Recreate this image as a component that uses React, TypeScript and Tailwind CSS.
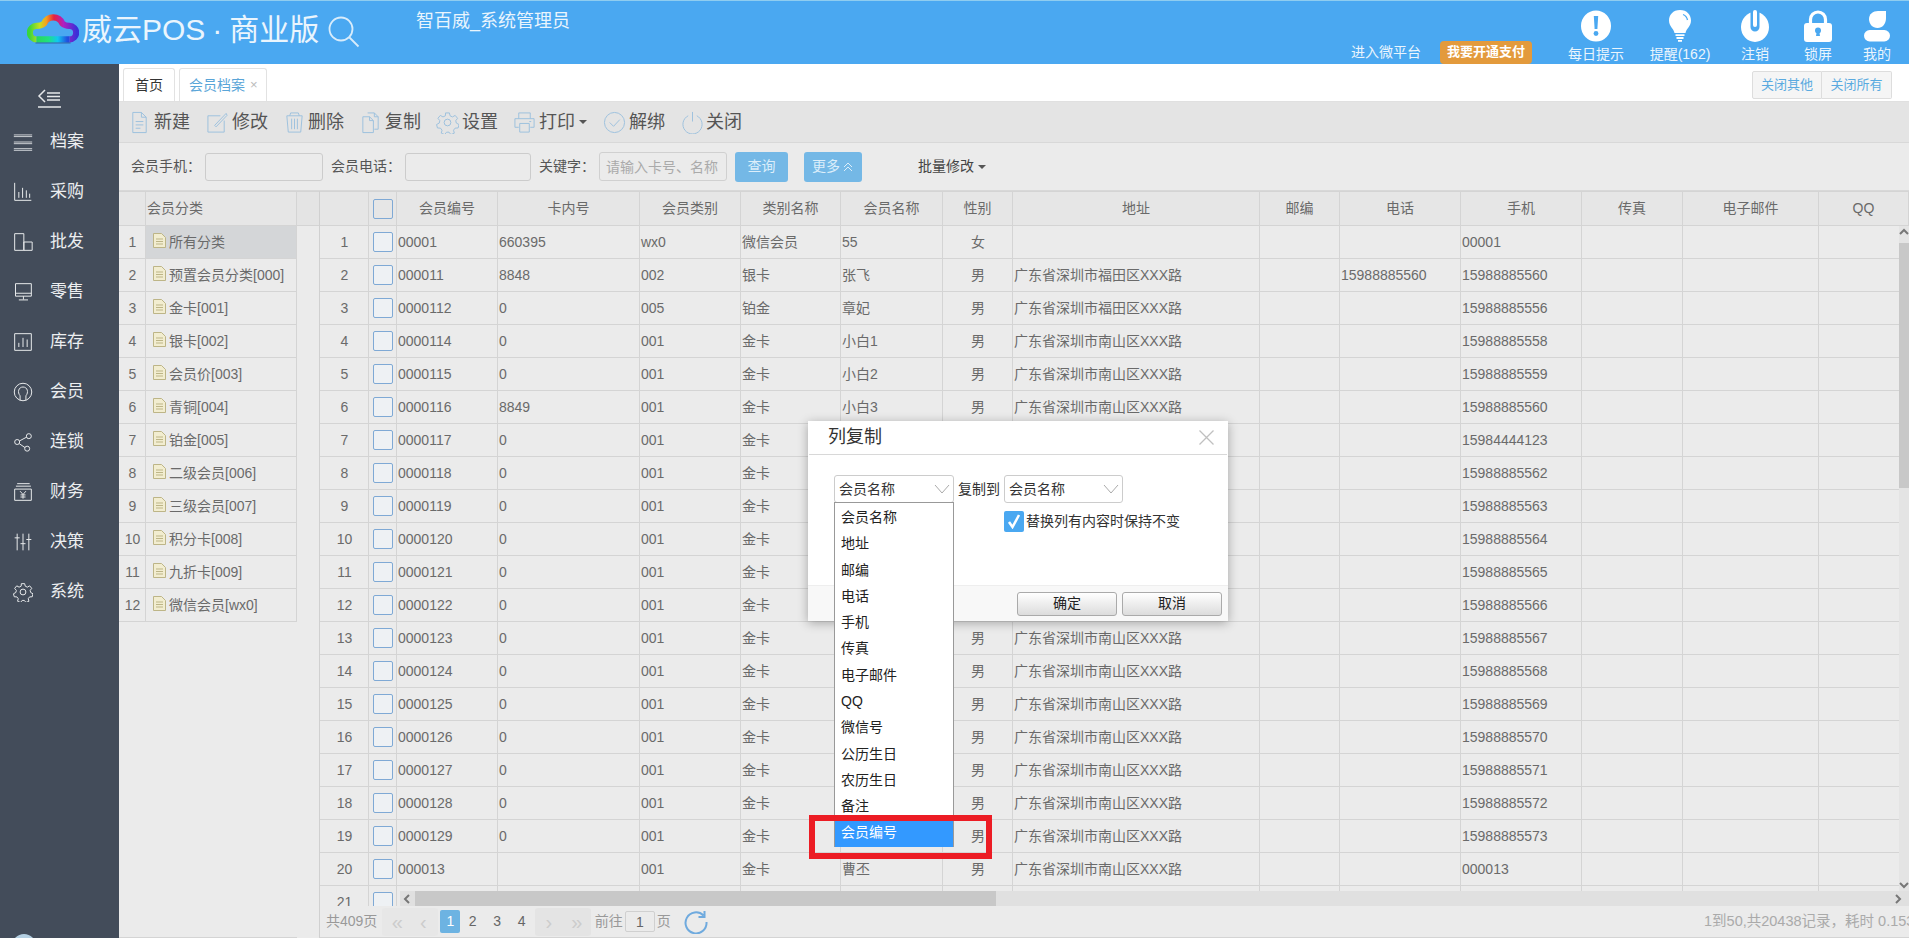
import type { ReactNode } from "react"

// 会员档案 page with the 列复制 dialog open

const menu = ["档案", "采购", "批发", "零售", "库存", "会员", "连锁", "财务", "决策", "系统"]

const categories = [
  "所有分类",
  "预置会员分类[000]",
  "金卡[001]",
  "银卡[002]",
  "会员价[003]",
  "青铜[004]",
  "铂金[005]",
  "二级会员[006]",
  "三级会员[007]",
  "积分卡[008]",
  "九折卡[009]",
  "微信会员[wx0]",
]

const columns = [
  { label: "", width: 49 },
  { label: "", width: 28 },
  { label: "会员编号", width: 101 },
  { label: "卡内号", width: 142 },
  { label: "会员类别", width: 101 },
  { label: "类别名称", width: 100 },
  { label: "会员名称", width: 102 },
  { label: "性别", width: 70 },
  { label: "地址", width: 247 },
  { label: "邮编", width: 80 },
  { label: "电话", width: 121 },
  { label: "手机", width: 121 },
  { label: "传真", width: 101 },
  { label: "电子邮件", width: 136 },
  { label: "QQ", width: 90 },
]

const FUTIAN = "广东省深圳市福田区XXX路"
const NANSHAN = "广东省深圳市南山区XXX路"

const rows = [
  ["00001", "660395", "wx0", "微信会员", "55", "女", "", "", "00001"],
  ["000011", "8848", "002", "银卡", "张飞", "男", FUTIAN, "15988885560", "15988885560"],
  ["0000112", "0", "005", "铂金", "章妃", "男", FUTIAN, "", "15988885556"],
  ["0000114", "0", "001", "金卡", "小白1", "男", NANSHAN, "", "15988885558"],
  ["0000115", "0", "001", "金卡", "小白2", "男", NANSHAN, "", "15988885559"],
  ["0000116", "8849", "001", "金卡", "小白3", "男", NANSHAN, "", "15988885560"],
  ["0000117", "0", "001", "金卡", "", "男", NANSHAN, "", "15984444123"],
  ["0000118", "0", "001", "金卡", "", "男", NANSHAN, "", "15988885562"],
  ["0000119", "0", "001", "金卡", "", "男", NANSHAN, "", "15988885563"],
  ["0000120", "0", "001", "金卡", "", "男", NANSHAN, "", "15988885564"],
  ["0000121", "0", "001", "金卡", "", "男", NANSHAN, "", "15988885565"],
  ["0000122", "0", "001", "金卡", "", "男", NANSHAN, "", "15988885566"],
  ["0000123", "0", "001", "金卡", "", "男", NANSHAN, "", "15988885567"],
  ["0000124", "0", "001", "金卡", "", "男", NANSHAN, "", "15988885568"],
  ["0000125", "0", "001", "金卡", "", "男", NANSHAN, "", "15988885569"],
  ["0000126", "0", "001", "金卡", "", "男", NANSHAN, "", "15988885570"],
  ["0000127", "0", "001", "金卡", "", "男", NANSHAN, "", "15988885571"],
  ["0000128", "0", "001", "金卡", "", "男", NANSHAN, "", "15988885572"],
  ["0000129", "0", "001", "金卡", "", "男", NANSHAN, "", "15988885573"],
  ["000013", "", "001", "金卡", "曹丕", "男", NANSHAN, "", "000013"],
  ["", "", "", "", "", "", "", "", ""],
]

const dropdownItems = ["会员名称", "地址", "邮编", "电话", "手机", "传真", "电子邮件", "QQ", "微信号", "公历生日", "农历生日", "备注"]

function Svg({ size, children, className }: { size: number; children: ReactNode; className?: string }) {
  return (
    <svg width={size} height={size} viewBox="0 0 24 24" fill="none" stroke="currentColor" className={className}>
      {children}
    </svg>
  )
}

function Logo() {
  const d = "M9 27.5A6.5 6.5 0 0 1 9 14.5C12 14.500 14.500 14 16.500 12A9.500 9.500 0 0 1 34 12C36 14 38 14.500 41 14.500A6.500 6.500 0 0 1 41 27.500"
  return (
    <svg width="52" height="34" viewBox="0 0 50 33" fill="none" className="shrink-0">
      <defs>
        <linearGradient id="cloudTop" gradientUnits="userSpaceOnUse" x1="2" y1="0" x2="48" y2="0">
          <stop offset="0" stopColor="#38d63c" />
          <stop offset="0.22" stopColor="#c8e020" />
          <stop offset="0.36" stopColor="#f5a020" />
          <stop offset="0.52" stopColor="#e8203c" />
          <stop offset="0.72" stopColor="#b020c0" />
          <stop offset="1" stopColor="#3a30d8" />
        </linearGradient>
        <linearGradient id="cloudBottom" gradientUnits="userSpaceOnUse" x1="2" y1="0" x2="48" y2="0">
          <stop offset="0" stopColor="#30d040" />
          <stop offset="0.4" stopColor="#20e080" />
          <stop offset="0.6" stopColor="#10c8f0" />
          <stop offset="0.8" stopColor="#2050e0" />
          <stop offset="1" stopColor="#3a30d8" />
        </linearGradient>
      </defs>
      <path d={d} stroke="url(#cloudTop)" strokeWidth="6" />
      <path d="M9 27.500H41" stroke="url(#cloudBottom)" strokeWidth="6" />
      <path d="M8 31H42" stroke="#22306a" strokeWidth="1" strokeOpacity="0.55" />
    </svg>
  )
}

function TopIcon({ name }: { name: string }) {
  const blue = "#4aa8f1"
  if (name === "tip")
    return (
      <svg width="32" height="32" viewBox="0 0 32 32">
        <ellipse cx="16" cy="16" rx="15" ry="15.5" fill="#fff" />
        <path d="M13.8 6h4.4l-.8 13h-2.8z" fill={blue} />
        <circle cx="16" cy="23.5" r="2.4" fill={blue} />
      </svg>
    )
  if (name === "bulb")
    return (
      <svg width="32" height="32" viewBox="0 0 32 32">
        <path d="M16 0C9 0 5 5 5 10.500c0 6 4.500 7.500 5.500 12.500h11C22.500 18 27 16.500 27 10.500 27 5 23 0 16 0z" fill="#fff" />
        <path d="M19 4.500c2.500 1 4 3 4.500 5.500" stroke={blue} strokeWidth="1.300" fill="none" />
        <path d="M11.500 25.200h9M12.500 28h7M14 30.800h4" stroke="#fff" strokeWidth="1.800" />
      </svg>
    )
  if (name === "power")
    return (
      <svg width="32" height="32" viewBox="0 0 32 32">
        <ellipse cx="16" cy="17" rx="14" ry="15" fill="#fff" />
        <path d="M11.500 0h9v17a4.500 4.500 0 0 1-9 0z" fill={blue} />
        <rect x="14" y="0" width="4" height="17" rx="2" fill="#fff" />
      </svg>
    )
  if (name === "lock")
    return (
      <svg width="32" height="32" viewBox="0 0 32 32">
        <path d="M8.500 15V9.500a7.500 7.500 0 0 1 15 0V15" stroke="#fff" strokeWidth="3.200" fill="none" />
        <rect x="2" y="13" width="28" height="19" rx="3" fill="#fff" />
        <circle cx="16" cy="20.500" r="3" fill={blue} />
        <path d="M14.800 21h2.400l.8 5h-4z" fill={blue} />
      </svg>
    )
  return (
    <svg width="32" height="32" viewBox="0 0 32 32">
      <path d="M8 9c0-5 4-8 9-8h8v7c0 6-3.500 10-8.500 10S8 14 8 9z" fill="#fff" />
      <rect x="3" y="20" width="26" height="11.500" rx="5.700" fill="#fff" />
    </svg>
  )
}

const gear = "M10 2h4l.7 3 2.500 1.200 2.800-1.600 2.500 3-1.900 2.500.6 2.500 2.800 1.500-.9 3.600-3.200.2-1.600 2.100.8 3.100-3.500 1.500-2-2.500h-2.600l-2 2.500-3.500-1.500.8-3.100-1.600-2.100-3.200-.2-.9-3.600 2.800-1.500.6-2.500L2 7.600l2.500-3 2.800 1.600L9.800 5z"

function MenuIcon({ index }: { index: number }) {
  const paths: ReactNode[] = [
    <path d="M1 3.500h22M1 5.500h22M1 12h22M1 14h22M1 20h22M1 22h22" strokeWidth="1" />,
    <path d="M2 1v21h20M7 19v-7M11.500 19V7M16 19v-9M20 19v-5" />,
    <path d="M2 2h11v20H2zM13 12h10v10H13z" />,
    <path d="M3 2h19v15H3zM3 13.500h19M12.500 17v4M7 21.500h11" />,
    <path d="M2 2h20v20H2zM7 18v-5M12 18V7M17 18v-9" />,
    <>
      <circle cx="12" cy="12" r="10.500" />
      <path d="M8.500 22v-5.500c-3.500-4-2-10.500 3.500-10.500s7 6.500 3.500 10.500V22" />
    </>,
    <>
      <circle cx="5" cy="12" r="3" />
      <circle cx="19" cy="5" r="3" />
      <circle cx="17" cy="20" r="3" />
      <path d="M7.800 10.700l8.500-4.500M7.500 14l7 4.800" />
    </>,
    <path d="M5 2h15M3.500 5h18M2 8.500h20v13.500H2zM8.500 11l3.500 4 3.500-4M12 15v5M9 15.500h6M9 18h6" />,
    <path d="M5 2v20M12 2v20M19 2v20M2 7h6M9 14h6M16 9h6" />,
    <>
      <circle cx="12" cy="12" r="3.500" />
      <path d={gear} />
    </>,
  ]
  return (
    <Svg size={20} className="text-[#e6e8ea]">
      <g strokeWidth="1.200">{paths[index]}</g>
    </Svg>
  )
}

const toolbarIcons: ReactNode[] = [
  <path d="M5 1.500h9l5 5v16H5zM14 1.500v5h5M8 11h8M8 14.500h8M8 18h5" />,
  <path d="M2 5h13M2 5v17h17V10M9 15L21 2.500M21 2.500l1 2L10.500 16.500 9 15" />,
  <path d="M7 5l1-3h8l1 3M4 5h16l-1.500 17h-13zM9 8v11M12 8v11M15 8v11" />,
  <path d="M9 2h7l4 4v13h-4M16 2v4h4M4 6h7l4 4v12.500H4zM11 6v4h4" />,
  <>
    <circle cx="12" cy="12" r="3.500" />
    <path d={gear} />
  </>,
  <path d="M6 8V2h12v6M6 17H2V8h20v9h-4M7 13h10v9H7zM17 11h2" />,
  <>
    <circle cx="12" cy="12" r="10.500" />
    <path d="M7 12l4 4 6.500-7" />
  </>,
  <path d="M7.500 5A10 10 0 1 0 16.500 5M12 1v10" />,
]

const toolbar = [
  { label: "新建", pad: 22, gap: 17, shift: -4 },
  { label: "修改", pad: 25, gap: 18, shift: -1 },
  { label: "删除", pad: 22, gap: 18, shift: -3 },
  { label: "复制", pad: 23, gap: 16, shift: -3 },
  { label: "设置", pad: 25, gap: 16, shift: -1 },
  { label: "打印", pad: 25, gap: 17, shift: -1, caret: true },
  { label: "解绑", pad: 25, gap: 17, shift: -1 },
  { label: "关闭", pad: 24, gap: 0, shift: -1 },
]

function Caret() {
  return <span className="inline-block border-x-[4px] border-t-[4px] border-x-transparent border-t-[#555]" />
}

function SelectBox({ width }: { width: string }) {
  return (
    <div className={`${width} h-[28px] flex items-center justify-between pl-[4px] pr-[3px] bg-white border border-[#ccc] rounded-[3px] text-[14px] text-[#333]`}>
      <span>会员名称</span>
      <svg width="16" height="10" viewBox="0 0 16 10" fill="none" stroke="#aaa">
        <path d="M1 1l7 8 7-8" />
      </svg>
    </div>
  )
}

function Dialog() {
  return (
    <div className="absolute left-[808px] top-[421px] w-[420px] h-[200px] bg-white shadow-[0_2px_10px_rgba(0,0,0,0.3)] flex flex-col">
      <div className="h-[34px] mx-px flex items-center justify-between pl-[19px] pr-[13px] border-b border-[#d8d8d8] text-[18px] text-[#333]">
        <span>列复制</span>
        <svg width="15" height="15" viewBox="0 0 15 15" stroke="#c0c0c0" strokeWidth="1.300">
          <path d="M0.500 0.500l14 14M14.500 0.500l-14 14" />
        </svg>
      </div>
      <div className="flex-1 pl-[26px] pt-[20px]">
        <div className="flex items-center text-[14px] text-[#333]">
          <SelectBox width="w-[120px]" />
          <span className="ml-[4px] mr-[4px] w-[42px]">复制到</span>
          <SelectBox width="w-[119px]" />
        </div>
        <div className="flex items-center ml-[170px] mt-[8px] text-[14px] text-[#333]">
          <span className="w-[20px] h-[21px] rounded-[2px] bg-[#4aa8f1] flex items-center justify-center">
            <svg width="14" height="15" viewBox="0 0 14 15" fill="none" stroke="#fff" strokeWidth="2.500">
              <path d="M2 8l3.500 5L12 1" />
            </svg>
          </span>
          <span className="ml-[2px]">替换列有内容时保持不变</span>
        </div>
      </div>
      <div className="h-[36px] flex items-center justify-end gap-[5px] pr-[6px] bg-[#f8f8f8] border-t border-[#eee]">
        {["确定", "取消"].map((t) => (
          <button
            key={t}
            className="w-[100px] h-[24px] text-[14px] text-[#222] rounded-[3px] border border-[#aaa] bg-gradient-to-b from-white to-[#dcdcdc]"
          >
            {t}
          </button>
        ))}
      </div>
    </div>
  )
}

function Dropdown() {
  return (
    <div className="absolute left-[834px] top-[502px] w-[120px] bg-white border border-[#999] border-b-0 text-[14px] text-[#222]">
      <div className="pt-[1px]">
        {dropdownItems.map((t) => (
          <div key={t} className="h-[26.300px] leading-[26px] pl-[6px]">
            {t}
          </div>
        ))}
      </div>
      <div className="h-[27px] leading-[25px] pl-[6px] bg-[#3399ff] text-white">会员编号</div>
    </div>
  )
}

function Pager() {
  return (
    <div className="h-[32px] flex items-center pl-[6px] bg-[#ebebeb] border-b border-[#d4d4d4] text-[14px] text-[#999] relative">
      <span className="mr-[5px] whitespace-nowrap">共409页</span>
      <div className="w-[56px] h-[28px] flex items-center bg-[#e7e7e7] rounded-[3px] text-[#ccc] text-[20px]">
        <span className="w-[30px] text-center">«</span>
        <span className="w-[22px] text-center">‹</span>
      </div>
      <span className="ml-[2px] w-[20px] h-[23px] leading-[23px] rounded-[2px] bg-[#6db3e2] text-white text-center">1</span>
      {["2", "3", "4"].map((n) => (
        <span key={n} className="w-[24.500px] text-center text-[#666]">
          {n}
        </span>
      ))}
      <div className="ml-[1px] w-[56px] h-[28px] flex items-center bg-[#e4e4e4] rounded-[3px] text-[#ccc] text-[20px]">
        <span className="w-[28px] text-center">›</span>
        <span className="w-[28px] text-center">»</span>
      </div>
      <span className="ml-[4px] whitespace-nowrap">前往</span>
      <span className="ml-[2px] w-[30px] h-[21px] leading-[20px] text-center text-[#666] border border-[#d0d0d0] rounded-[2px]">1</span>
      <span className="ml-[2px]">页</span>
      <svg width="24" height="24" viewBox="0 0 24 24" fill="none" stroke="#6faade" strokeWidth="2" className="ml-[13px]">
        <path d="M19.500 5.500A10.500 10.500 0 1 0 22.500 12M20.500 1v6h-6" />
      </svg>
      <span className="ml-auto w-[205px] shrink-0 whitespace-nowrap overflow-hidden text-[14.500px] text-[#aaa]">1到50,共20438记录，耗时 0.153</span>
    </div>
  )
}

function Chevron({ dir }: { dir: "l" | "r" | "u" | "d" }) {
  const d = { l: "M7 2L3 6l4 4", r: "M4 2l4 4-4 4", u: "M2 8l4-4 4 4", d: "M2 4l4 4 4-4" }[dir]
  return (
    <svg width="12" height="12" viewBox="0 0 12 12" fill="none" stroke="#777" strokeWidth="2">
      <path d={d} />
    </svg>
  )
}

export default function App() {
  const headCell = "h-[35px] border-t border-b border-r border-[#d4d4d4] bg-[#e6e6e6] font-normal text-center"
  const cell = "h-[33px] p-0 pl-px border-b border-r border-[#d4d4d4] whitespace-nowrap overflow-hidden"

  return (
    <div className="relative w-[1909px] h-[938px] overflow-hidden flex flex-col bg-white font-['Liberation_Sans','Noto_Sans_CJK_SC',sans-serif] text-[14px] text-[#6a6a6a]">
      {/* header */}
      <header className="h-[64px] shrink-0 flex bg-[#4aa8f1] border-t border-[#8fcdf0] text-[#eaf5fd]">
        <div className="ml-[27px] mt-[10px] flex items-start">
          <Logo />
          <span className="ml-[3px] text-[30px] leading-[38px] whitespace-nowrap">
            威云POS<span className="mx-[7px]">·</span>商业版
          </span>
          <svg width="32" height="32" viewBox="0 0 32 32" fill="none" stroke="#d8ecfb" strokeWidth="1.800" className="ml-[9px] mt-[5px]">
            <circle cx="13" cy="13" r="11.500" />
            <path d="M21 21l9.500 9.500" />
          </svg>
        </div>
        <span className="absolute left-[416px] top-[9px] text-[18px] leading-[25px] whitespace-nowrap">智百威_系统管理员</span>
        <div className="ml-auto flex items-end">
          <span className="mb-[1px] whitespace-nowrap">进入微平台</span>
          <span className="ml-[19px] w-[92px] h-[23px] leading-[22px] text-center rounded-[4px] bg-[#e39a3c] text-[13px] font-bold text-white">我要开通支付</span>
          <div className="ml-[22px] flex">
            {[
              { name: "tip", label: "每日提示", w: 84 },
              { name: "bulb", label: "提醒(162)", w: 84 },
              { name: "power", label: "注销", w: 66 },
              { name: "lock", label: "锁屏", w: 60 },
              { name: "me", label: "我的", w: 58 },
            ].map((it) => (
              <div key={it.name} style={{ width: it.w }} className="flex flex-col items-center">
                <TopIcon name={it.name} />
                <span className="mt-[2px] leading-[20px] whitespace-nowrap">{it.label}</span>
              </div>
            ))}
          </div>
          <div className="w-[3px]" />
        </div>
      </header>

      <div className="flex-1 flex min-h-0">
        {/* sidebar */}
        <aside className="w-[119px] shrink-0 bg-[#434c5a] text-[#eceef0] relative overflow-hidden">
          <div className="h-[53px] flex items-end pl-[37px] pb-[9px]">
            <svg width="25" height="20" viewBox="0 0 25 20" fill="none" stroke="#e6e8ea" strokeWidth="1.500">
              <path d="M8 2L2 8l6 6M10 5h13M10 8.500h13M10 12h13M1 19h23" />
            </svg>
          </div>
          {menu.map((m, i) => (
            <div key={m} className="h-[50px] flex items-center pl-[13px]">
              <MenuIcon index={i} />
              <span className="ml-[17px] text-[17px]">{m}</span>
            </div>
          ))}
          <div className="absolute left-[12px] top-[870px] w-[24px] h-[24px] rounded-full bg-[#b4cfe2]" />
        </aside>

        <main className="flex-1 min-w-0 flex flex-col">
          {/* tabs */}
          <div className="h-[38px] shrink-0 flex items-end pl-[4px] bg-white border-b border-[#e0e0e0]">
            <div className="w-[52px] h-[33px] leading-[32px] text-center rounded-t-[3px] border border-b-0 border-[#e2e2e2] text-[#333]">首页</div>
            <div className="ml-[4px] w-[88px] h-[33px] leading-[32px] pl-[9px] rounded-t-[3px] border border-b-0 border-[#e2e2e2] text-[#5aa5d8] flex items-center gap-[5px]">
              <span>会员档案</span>
              <span className="text-[#bbb] text-[13px]">×</span>
            </div>
            <div className="ml-auto mr-[17px] mb-[2px] flex text-[13px] text-[#5aaae0]">
              <span className="w-[70px] h-[28px] leading-[26px] text-center bg-[#f5f5f5] border border-[#ddd] rounded-l-[2px]">关闭其他</span>
              <span className="w-[70px] h-[28px] leading-[26px] text-center bg-[#f5f5f5] border border-l-0 border-[#ddd] rounded-r-[2px]">关闭所有</span>
            </div>
          </div>

          {/* toolbar */}
          <div className="h-[41px] shrink-0 flex items-center pl-[13px] bg-[#e4e4e4] border-b border-[#d8d8d8] text-[18px] text-[#555]">
            {toolbar.map((t, i) => (
              <div key={t.label} style={{ marginRight: t.gap }} className="flex items-center">
                <div style={{ width: t.pad, marginLeft: t.shift }} className="shrink-0">
                  <Svg size={23} className="text-[#9cc0de]">
                    <g strokeWidth="1">{toolbarIcons[i]}</g>
                  </Svg>
                </div>
                <span style={{ marginLeft: -t.shift }} className="whitespace-nowrap">
                  {t.label}
                </span>
                {t.caret && (
                  <span className="ml-[4px] flex">
                    <Caret />
                  </span>
                )}
              </div>
            ))}
          </div>

          {/* filter */}
          <div className="h-[48px] shrink-0 flex items-center pl-[12px] bg-[#ebebeb] border-b border-[#d8d8d8] text-[#555]">
            <span className="w-[74px] whitespace-nowrap">会员手机：</span>
            <input readOnly className="w-[118px] h-[28px] bg-[#ebebeb] border border-[#ccc] rounded-[3px]" />
            <span className="ml-[8px] w-[74px] whitespace-nowrap">会员电话：</span>
            <input readOnly className="w-[126px] h-[28px] bg-[#ebebeb] border border-[#ccc] rounded-[3px]" />
            <span className="ml-[8px] w-[60px] whitespace-nowrap">关键字：</span>
            <input
              readOnly
              placeholder="请输入卡号、名称"
              className="w-[128px] h-[29px] pl-[6px] bg-[#ebebeb] border border-[#d0d0d0] rounded-[3px] placeholder:text-[#aaa]"
            />
            <button className="ml-[8px] w-[53px] h-[30px] rounded-[3px] bg-[#74b8e6] text-[#dceefa]">查询</button>
            <button className="ml-[16px] w-[58px] h-[30px] rounded-[3px] bg-[#74b8e6] text-[#dceefa] flex items-center justify-center gap-[2px]">
              更多
              <svg width="12" height="12" viewBox="0 0 12 12" fill="none" stroke="#dceefa">
                <path d="M2 6l4-4 4 4M2 10l4-4 4 4" />
              </svg>
            </button>
            <span className="ml-[56px] text-[#444] flex items-center gap-[4px] whitespace-nowrap">
              批量修改
              <Caret />
            </span>
          </div>

          {/* body */}
          <div className="flex-1 min-h-0 flex bg-[#ebebeb]">
            <div className="w-[178px] shrink-0 border-b border-[#d4d4d4]">
              <table className="table-fixed w-[178px] border-separate border-spacing-0">
                <colgroup>
                  <col className="w-[27px]" />
                  <col className="w-[151px]" />
                </colgroup>
                <thead>
                  <tr>
                    <th className={headCell} />
                    <th className={`${headCell} text-left pl-px`}>会员分类</th>
                  </tr>
                </thead>
                <tbody>
                  {categories.map((c, i) => (
                    <tr key={c}>
                      <td className={`${cell} text-center`}>{i + 1}</td>
                      <td className={`${cell} ${i === 0 ? "bg-[#d4d6d8]" : ""}`}>
                        <div className="flex items-center pl-[6px]">
                          <svg width="13" height="15" viewBox="0 0 13 15" className="shrink-0 -mt-[3px]" fill="#f2edd0" stroke="#bdb587">
                            <path d="M.5.500h8l4 4v10H.500zM3 6h7M3 8.500h7M3 11h7" />
                          </svg>
                          <span className="ml-[3px] whitespace-nowrap">{c}</span>
                        </div>
                      </td>
                    </tr>
                  ))}
                </tbody>
              </table>
            </div>

            <div className="w-[22px] shrink-0">
              <div className="h-[35px] bg-[#e4e4e4] border-t border-b border-[#d4d4d4]" />
            </div>

            <div className="flex-1 min-w-0 flex flex-col border-l border-[#d0d0d0]">
              <div className="flex-1 min-h-0 relative overflow-hidden">
                <table className="table-fixed w-[1589px] border-separate border-spacing-0">
                  <colgroup>
                    {columns.map((c, i) => (
                      <col key={i} style={{ width: c.width }} />
                    ))}
                  </colgroup>
                  <thead>
                    <tr>
                      {columns.map((c, i) => (
                        <th key={i} className={headCell}>
                          {i === 1 ? <span className="block mx-auto w-[20px] h-[20px] border border-[#7fa9d5] rounded-[2px]" /> : c.label}
                        </th>
                      ))}
                    </tr>
                  </thead>
                  <tbody>
                    {rows.map((r, i) => (
                      <tr key={i}>
                        <td className={`${cell} text-center`}>{i + 1}</td>
                        <td className={cell}>
                          <span className="block mx-auto w-[20px] h-[20px] border border-[#7fa9d5] rounded-[2px] bg-[#eef1f4]" />
                        </td>
                        <td className={cell}>{r[0]}</td>
                        <td className={cell}>{r[1]}</td>
                        <td className={cell}>{r[2]}</td>
                        <td className={cell}>{r[3]}</td>
                        <td className={cell}>{r[4]}</td>
                        <td className={`${cell} text-center`}>{r[5]}</td>
                        <td className={cell}>{r[6]}</td>
                        <td className={cell} />
                        <td className={cell}>{r[7]}</td>
                        <td className={cell}>{r[8]}</td>
                        <td className={cell} />
                        <td className={cell} />
                        <td className={cell} />
                      </tr>
                    ))}
                  </tbody>
                </table>

                {/* scrollbars lie over the grid */}
                <div className="absolute right-0 top-[35px] bottom-[15px] w-[10px] bg-[#e4e4e4] flex flex-col items-center justify-between">
                  <Chevron dir="u" />
                  <div className="absolute top-[17px] left-0 w-[10px] h-[245px] bg-[#c8c8c8]" />
                  <Chevron dir="d" />
                </div>
                <div className="absolute left-[80px] right-0 bottom-0 h-[15px] bg-[#e0e0e0] flex items-center">
                  <span className="w-[15px] flex justify-center">
                    <Chevron dir="l" />
                  </span>
                  <div className="w-[581px] h-[15px] bg-[#c8c8c8]" />
                  <span className="ml-auto mr-[5px] flex">
                    <Chevron dir="r" />
                  </span>
                </div>
              </div>
              <Pager />
            </div>
          </div>
        </main>
      </div>

      <Dialog />
      <Dropdown />
      {/* red annotation box */}
      <div className="absolute left-[809px] top-[815px] w-[183px] h-[44px] border-[6px] border-[#ec1c24]" />
    </div>
  )
}
